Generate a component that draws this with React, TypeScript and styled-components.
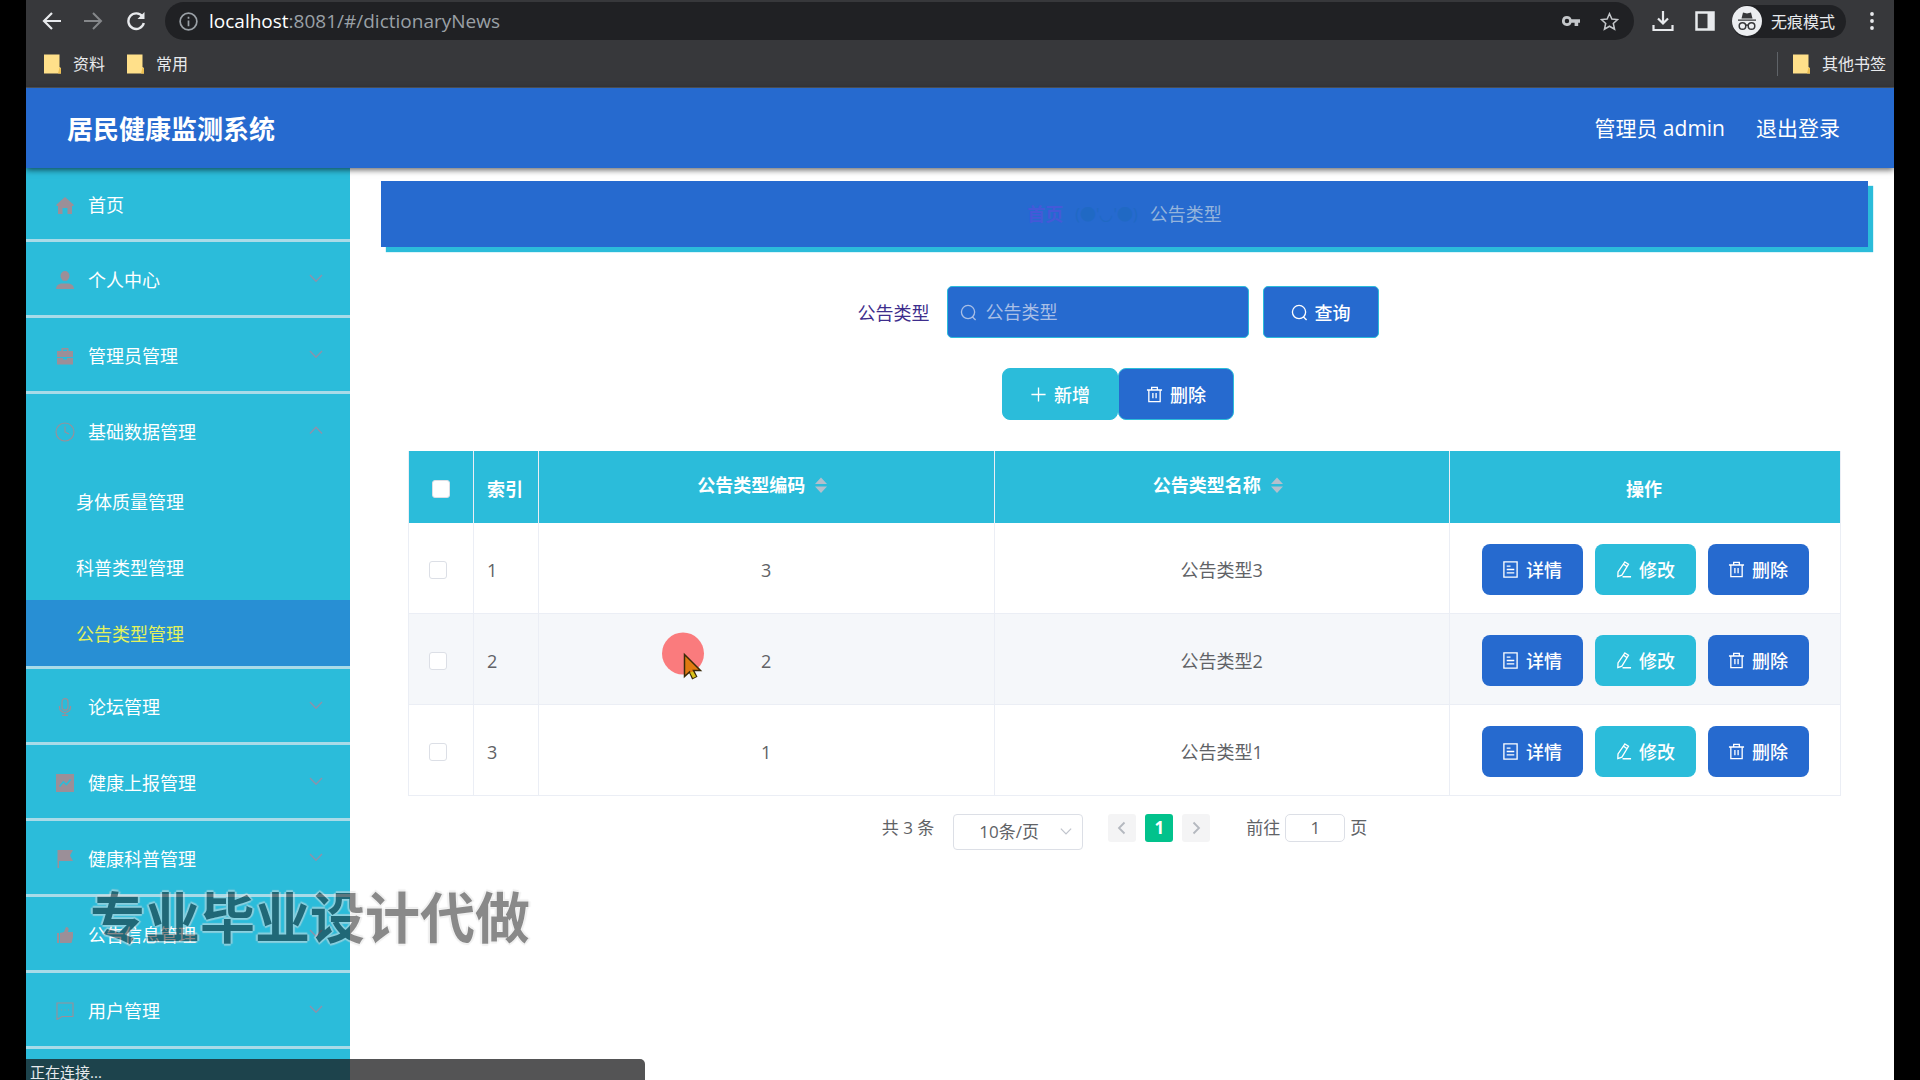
import React from "react";
import styled, { createGlobalStyle, css } from "styled-components";

const BLUE = "#266acf";
const CYAN = "#2bbcda";
const SANS = `"Open Sans", "Noto Sans CJK SC", sans-serif`;

const GlobalStyle = createGlobalStyle`
  *, *::before, *::after { box-sizing: border-box; }
  html, body { margin: 0; background: #000; }
  body { font-family: ${SANS}; font-size: 18px; color: #606266; overflow: hidden; }
  button, input, select { font: inherit; margin: 0; }
  a { color: inherit; text-decoration: none; }
  svg { display: block; flex: none; }
`;

const Screen = styled.div`
  display: flex;
  flex-direction: column;
  height: 100vh;
  margin: 0 26px;
  background: #fff;
  overflow: hidden;
  position: relative;
`;

/* ---------- browser frame ---------- */

const Toolbar = styled.div`
  display: flex;
  align-items: center;
  flex: none;
  height: 42px;
  padding: 0 10px 0 16px;
  background: #37383b;
`;

const IconButton = styled.button<{ $w: number; $color?: string }>`
  display: flex;
  align-items: center;
  justify-content: center;
  width: ${(p) => p.$w}px;
  height: 32px;
  padding: 0;
  border: 0;
  background: none;
  color: ${(p) => p.$color ?? "#e8eaed"};
`;

const Omnibox = styled.div`
  display: flex;
  align-items: center;
  flex: 1;
  height: 38px;
  margin: 0 8px 0 17px;
  padding: 0 8px 0 14px;
  border-radius: 19px;
  background: #202124;
  color: #9aa0a6;
`;

const Address = styled.span`
  flex: 1;
  padding-left: 11px;
  font-size: 19px;
  line-height: 24px;
  b { font-weight: 400; color: #fff; }
`;

const Incognito = styled.div`
  display: flex;
  align-items: center;
  gap: 9px;
  height: 33px;
  margin: 0 14px 0 6px;
  padding-right: 11px;
  border-radius: 17px;
  background: #202124;
  color: #e8eaed;
  font-size: 16px;
`;

const Bookmarks = styled.nav`
  display: flex;
  align-items: center;
  flex: none;
  height: 46px;
  padding: 0 8px 2px 18px;
  gap: 22px;
  border-bottom: 1px solid #56585c;
  background: #37383b;
  color: #e8eaed;
  font-size: 16px;
`;

const Bookmark = styled.a<{ $last?: boolean }>`
  display: flex;
  align-items: center;
  gap: 12px;
  line-height: 24px;
  ${(p) =>
    p.$last &&
    css`
      margin-left: auto;
      padding-left: 15px;
      border-left: 1px solid #5f6368;
    `}
`;

/* ---------- application frame ---------- */

const AppHeader = styled.header`
  display: flex;
  align-items: center;
  flex: none;
  height: 80px;
  padding: 0 54px 0 41px;
  background: ${BLUE};
  color: #fff;
  box-shadow: 0 2px 6px rgba(0, 0, 0, 0.6);
  z-index: 2;
`;

const AppTitle = styled.h1`
  flex: 1;
  margin: 0;
  padding-top: 2px;
  font-size: 26px;
  line-height: 36px;
`;

const HeaderLinks = styled.div`
  display: flex;
  gap: 31px;
  font-size: 21px;
  line-height: 30px;
`;

const Columns = styled.div`
  display: flex;
  flex: 1;
  min-height: 0;
`;

const Sidebar = styled.nav`
  flex: none;
  width: 324px;
  background: ${CYAN};
  color: #fff;
  overflow: hidden;
`;

const MenuGroup = styled.div`
  border-bottom: 3px solid #a9dbe8;
`;

const MenuItem = styled.a<{ $h: number }>`
  display: flex;
  align-items: center;
  height: ${(p) => p.$h}px;
  padding: 0 27px 0 29px;
  color: #fff;
  > svg { color: #8d92ab; }
`;

const MenuIcon = styled.i`
  display: flex;
  justify-content: center;
  width: 20px;
  padding-top: 2px;
  color: #9b8f98;
`;

const MenuText = styled.span`
  flex: 1;
  padding-left: 13px;
`;

const SubItem = styled.a<{ $active?: boolean }>`
  display: flex;
  align-items: center;
  height: 66px;
  padding-left: 50px;
  background: ${(p) => (p.$active ? "#288fd4" : "transparent")};
  color: ${(p) => (p.$active ? "#e3f25c" : "#fff")};
`;

const Main = styled.main`
  flex: 1;
  min-width: 0;
  padding: 13px 26px 0 31px;
`;

const Breadcrumb = styled.nav`
  display: flex;
  align-items: center;
  justify-content: center;
  gap: 12px;
  height: 66px;
  padding-bottom: 2px;
  background: ${BLUE};
  box-shadow: 5px 5px 1px ${CYAN};
  color: #94b4dc;
  a { font-weight: 700; color: #4459d8; }
  i { font-style: normal; font-size: 16px; color: #2069c4; }
`;

const Body = styled.div`
  display: flex;
  flex-direction: column;
  gap: 30px;
  padding: 39px 27px 0;
`;

const Line = styled.div<{ $gap?: number }>`
  display: flex;
  align-items: center;
  justify-content: center;
  gap: ${(p) => p.$gap ?? 0}px;
  padding-right: 13px;
`;

const FieldLabel = styled.label`
  margin-right: 3px;
  color: #3d2d8c;
`;

const SearchBox = styled.div`
  display: flex;
  align-items: center;
  gap: 9px;
  width: 302px;
  height: 52px;
  padding: 0 12px;
  border: 1px solid ${CYAN};
  border-radius: 5px;
  background: ${BLUE};
  color: #a9bfe6;
`;

const SearchInput = styled.input`
  flex: 1;
  min-width: 0;
  padding: 0;
  border: 0;
  outline: 0;
  background: none;
  color: #fff;
  &::placeholder { color: #a9bfe6; opacity: 1; }
`;

const Button = styled.button<{ $tone?: "cyan"; $size?: "row"; $radius?: number }>`
  display: flex;
  align-items: center;
  justify-content: center;
  gap: 7px;
  width: ${(p) => (p.$size === "row" ? 101 : 116)}px;
  height: ${(p) => (p.$size === "row" ? 51 : 52)}px;
  padding: 0;
  border: ${(p) => (p.$size === "row" ? "0" : `1px solid ${CYAN}`)};
  border-radius: ${(p) => p.$radius ?? 8}px;
  background: ${(p) => (p.$tone === "cyan" ? CYAN : BLUE)};
  color: #fff;
  font-weight: 500;
`;

/* ---------- table ---------- */

const Table = styled.table`
  width: 100%;
  margin-top: 1px;
  table-layout: fixed;
  border-spacing: 0;
  border-left: 1px solid #ebeef5;
  line-height: 24px;
`;

const Th = styled.th<{ $w?: number; $raised?: boolean }>`
  width: ${(p) => (p.$w ? `${p.$w}px` : "auto")};
  height: 72px;
  padding: ${(p) => (p.$raised ? "0 0 4px" : "3px 2px 0 0")};
  border-right: 1px solid #ebeef5;
  background: ${CYAN};
  color: #fff;
  font-weight: 700;
`;

const Td = styled.td<{ $align?: "left" | "center" }>`
  height: 91px;
  padding: 3px 0 0 ${(p) => (p.$align === "left" ? "13px" : "0")};
  border-right: 1px solid #ebeef5;
  border-bottom: 1px solid #ebeef5;
  text-align: ${(p) => p.$align ?? "center"};
`;

const Tr = styled.tr<{ $hover?: boolean }>`
  background: ${(p) => (p.$hover ? "#f5f7fa" : "#fff")};
`;

const Check = styled.input<{ $head?: boolean }>`
  appearance: none;
  display: block;
  width: 18px;
  height: 18px;
  margin: 0 0 0 ${(p) => (p.$head ? 23 : 20)}px;
  border: 1px solid #dcdfe6;
  border-radius: 3px;
  background: #fff;
`;

const SortLabel = styled.span`
  display: inline-flex;
  align-items: center;
  gap: 10px;
  padding-right: 8px;
`;

const Actions = styled.div`
  display: flex;
  justify-content: center;
  gap: 12px;
`;

/* ---------- pagination ---------- */

const Pager = styled.div`
  display: flex;
  align-items: flex-start;
  justify-content: center;
  margin-top: -12px;
  font-size: 17px;
  line-height: 28px;
`;

const SelectBox = styled.div`
  display: grid;
  align-items: center;
  margin: 0 25px 0 19px;
  > * { grid-area: 1 / 1; }
  svg { justify-self: end; margin-right: 11px; color: #c0c4cc; pointer-events: none; }
`;

const Select = styled.select`
  appearance: none;
  width: 130px;
  height: 36px;
  padding: 0 0 1px 25px;
  border: 1px solid #dcdfe6;
  border-radius: 4px;
  background: #fff;
  color: #606266;
`;

const PageButton = styled.button<{ $active?: boolean }>`
  display: flex;
  align-items: center;
  justify-content: center;
  width: 28px;
  height: 28px;
  margin-right: 9px;
  padding: 0;
  border: 0;
  border-radius: 3px;
  background: ${(p) => (p.$active ? "#02c28c" : "#f4f4f5")};
  color: ${(p) => (p.$active ? "#fff" : "#b4b8bf")};
  font-weight: 700;
`;

const Jump = styled.label`
  display: flex;
  gap: 5px;
  margin-left: 27px;
`;

const JumpInput = styled.input`
  width: 60px;
  height: 28px;
  padding: 0;
  border: 1px solid #dcdfe6;
  border-radius: 5px;
  color: #606266;
  text-align: center;
`;

/* ---------- overlays ---------- */

const Watermark = styled.div`
  position: absolute;
  left: 64px;
  top: 882px;
  z-index: 3;
  font-size: 55px;
  font-weight: 700;
  line-height: 70px;
  color: #161616;
  opacity: 0.5;
  text-shadow: 0 0 2px #fff, 2px 0 1px #ddd, -2px 0 1px #ddd, 0 2px 1px #ddd, 0 -2px 1px #ddd;
  pointer-events: none;
`;

const StatusBubble = styled.div`
  position: absolute;
  left: 0;
  bottom: 0;
  z-index: 4;
  width: 619px;
  height: 21px;
  padding: 1px 4px;
  overflow: hidden;
  border-radius: 0 5px 0 0;
  background: rgba(24, 24, 26, 0.74);
  color: #e8eaed;
  font-size: 15px;
  line-height: 24px;
`;

const Pointer = styled.div`
  position: absolute;
  left: 636px;
  top: 632px;
  z-index: 5;
  pointer-events: none;
`;

/* ---------- icons ---------- */

type IconProps = { size?: number; children: React.ReactNode; box?: number; sw?: number; fill?: boolean };
const Icon = ({ size = 18, box = 18, sw = 1.4, fill, children }: IconProps) => (
  <svg
    width={size}
    height={size}
    viewBox={`0 0 ${box} ${box}`}
    fill={fill ? "currentColor" : "none"}
    stroke={fill ? "none" : "currentColor"}
    strokeWidth={sw}
    aria-hidden="true"
  >
    {children}
  </svg>
);

const Search = () => (
  <Icon size={17}>
    <circle cx="8.5" cy="8.5" r="7" />
    <path d="M13 13.5l3.5 3.5" />
  </Icon>
);
const Plus = () => (
  <Icon size={17}>
    <path d="M9 1.5v15M1.5 9h15" />
  </Icon>
);
const Trash = () => (
  <Icon size={17}>
    <path d="M1 4.2h16M6 4V1.5h6V4M3 4.5v12h12v-12M7.3 7.5v5.5M10.7 7.5v5.5" />
  </Icon>
);
const Doc = () => (
  <Icon size={17}>
    <path d="M2 1h14v16H2zM5 5.5h4M5 9h8M5 12.5h8" />
  </Icon>
);
const Edit = () => (
  <Icon size={17}>
    <path d="M10.5 1l3.8 2.5-7 11.500-4.3 1.500.2-5zM9 3.500l3.8 2.500M8 16.700h9" />
  </Icon>
);
const Chevron = ({ up, size = 14 }: { up?: boolean; size?: number }) => (
  <Icon size={size} box={14} sw={1.4}>
    <path d={up ? "M1 9.500L7 3.200l6 6.300" : "M1 3L7 9.300 13 3"} />
  </Icon>
);
const Carets = () => (
  <svg width="12" height="18" viewBox="0 0 12 18" fill="#b4bfcc" aria-hidden="true">
    <path d="M0 8L6 1.5 12 8zM0 10.5h12L6 17z" />
  </svg>
);
const Folder = () => (
  <svg width="17" height="20" viewBox="0 0 17 20" aria-hidden="true">
    <path d="M0 .5h15.5V13l1.500 1v5.500H0z" fill="#ffe08a" />
    <path d="M14 19.500l1.500-6 1.500 1v5z" fill="#eec052" />
  </svg>
);

const glyphs: Record<string, React.ReactNode> = {
  home: <Icon fill><path d="M9 1L.5 8.500V10H2v8h4.500v-6h5v6H16v-8h1.500V8.500z" /></Icon>,
  person: <Icon fill><path d="M9 0a4.500 4.800 0 014.500 4.800c0 2-1.200 4-2.500 4.900H7C5.700 8.800 4.500 6.800 4.500 4.800A4.500 4.800 0 019 0zM0 18c0-3 2-5 5-5.500h8c3 .5 5 2.500 5 5.500z" /></Icon>,
  suitcase: <Icon fill><path d="M5.500 4V1h7v3H17v6H1V4zm1.500 0h4V2.500H7zM1 11h6v1.500h4V11h6v6.500H1z" /></Icon>,
  clock: <Icon size={20} box={20} sw={1.1}><circle cx="10" cy="10" r="9" /><path d="M10 4.500V10l4 2" /></Icon>,
  mic: <Icon sw={1.2}><rect x="6" y="0.700" width="6" height="11.500" rx="3" /><path d="M3.500 8v1.500a5.500 5 0 0011 0V8M9 14.500v3M6 17.300h6" /></Icon>,
  chart: <Icon fill><path fillRule="evenodd" d="M0 0h18v18H0zM3 12l1.200 1 3.300-4 3 2.700L15.200 6 14 5l-3.700 4.500-3-2.700z" /></Icon>,
  flag: <Icon fill><path d="M1.500 0H17l-3 5.500 3 5.500H3v7H1.500z" /></Icon>,
  notice: <Icon fill><path d="M1 7h2v10H1zM4 7l4-1 2-5c2 0 3 1 2.500 3L12 6h5v5l-1.500 6H4z" /></Icon>,
  message: <Icon sw={1.1}><path d="M1 1h16v13.500H6L1 17.500zM5 8h1M8.500 8h1M12 8h1" /></Icon>,
};

/* ---------- data ---------- */

const menu: { icon: string; text: string; children?: string[] }[] = [
  { icon: "home", text: "首页" },
  { icon: "person", text: "个人中心" },
  { icon: "suitcase", text: "管理员管理" },
  { icon: "clock", text: "基础数据管理", children: ["身体质量管理", "科普类型管理", "公告类型管理"] },
  { icon: "mic", text: "论坛管理" },
  { icon: "chart", text: "健康上报管理" },
  { icon: "flag", text: "健康科普管理" },
  { icon: "notice", text: "公告信息管理" },
  { icon: "message", text: "用户管理" },
];

const rows = [
  { index: 1, code: 3, name: "公告类型3" },
  { index: 2, code: 2, name: "公告类型2" },
  { index: 3, code: 1, name: "公告类型1" },
];

export default function App() {
  return (
    <>
      <GlobalStyle />
      <Screen>
        <Toolbar>
          <IconButton $w={20} aria-label="后退">
            <Icon size={20} box={20} sw={2.2}><path d="M19 10H2M10 2l-8 8 8 8" /></Icon>
          </IconButton>
          <IconButton $w={62} $color="#85878a" aria-label="前进">
            <Icon size={20} box={20} sw={2}><path d="M1 10h17M10 2l8 8-8 8" /></Icon>
          </IconButton>
          <IconButton $w={24} aria-label="重新加载">
            <Icon size={20} box={20} sw={2.4}><path d="M16.500 5.500A7.800 7.800 0 1017.800 12" /><path d="M18.500 1v7h-7z" fill="currentColor" stroke="none" /></Icon>
          </IconButton>
          <Omnibox>
            <Icon size={19} box={20} sw={1.8}><circle cx="10" cy="10" r="8.800" /><path d="M10 9v6M10 5v2" /></Icon>
            <Address><b>localhost</b>:8081/#/dictionaryNews</Address>
            <IconButton $w={46} $color="#c4c7ca" aria-label="密码">
              <Icon size={18} box={20} fill><path fillRule="evenodd" d="M5.500 4.500a5.500 5.500 0 015.100 3.500H20v4h-2v3.500h-4V12h-3.400A5.500 5.500 0 115.500 4.500zm0 3a2.500 2.500 0 100 5 2.500 2.500 0 000-5z" /></Icon>
            </IconButton>
            <IconButton $w={32} $color="#c4c7ca" aria-label="收藏">
              <Icon size={19} box={20} sw={1.6}><path d="M10 1.800l2.500 5.600 6 .6-4.500 4.100 1.300 6L10 15l-5.300 3.100 1.300-6L1.500 8l6-.6z" /></Icon>
            </IconButton>
          </Omnibox>
          <IconButton $w={42} aria-label="下载">
            <Icon size={22} box={22} sw={2.2}><path d="M11 1v12M6 8.500l5 5 5-5M1.500 15v5h19v-5" /></Icon>
          </IconButton>
          <IconButton $w={42} aria-label="侧边栏">
            <Icon size={20} box={20} sw={2.5}><path d="M1.500 1.500h17v17h-17z" /><path d="M12.500 1.500h6v17h-6z" fill="currentColor" stroke="none" /></Icon>
          </IconButton>
          <Incognito>
            <svg width="30" height="30" viewBox="0 0 30 30" aria-hidden="true">
              <circle cx="15" cy="15" r="15" fill="#eceef1" />
              <path d="M11 6.500l4 1 4-1 1.500 6h-11zM6 13.500h18v1.300H6z" fill="#37383b" />
              <g fill="none" stroke="#37383b" strokeWidth="1.5"><circle cx="10.500" cy="20" r="3.300" /><circle cx="19.500" cy="20" r="3.300" /><path d="M13.800 19.500q1.200-.8 2.400 0" /></g>
            </svg>
            无痕模式
          </Incognito>
          <IconButton $w={24} aria-label="菜单">
            <Icon size={18} fill><circle cx="9" cy="2" r="1.900" /><circle cx="9" cy="9" r="1.900" /><circle cx="9" cy="16" r="1.900" /></Icon>
          </IconButton>
        </Toolbar>
        <Bookmarks>
          <Bookmark href="#"><Folder />资料</Bookmark>
          <Bookmark href="#"><Folder />常用</Bookmark>
          <Bookmark href="#" $last><Folder />其他书签</Bookmark>
        </Bookmarks>

        <AppHeader>
          <AppTitle>居民健康监测系统</AppTitle>
          <HeaderLinks>
            <span>管理员 admin</span>
            <a href="#logout">退出登录</a>
          </HeaderLinks>
        </AppHeader>

        <Columns>
          <Sidebar>
            {menu.map((m, i) => (
              <MenuGroup key={m.text}>
                <MenuItem href="#" $h={i === 0 ? 71 : m.children ? 74 : 73}>
                  <MenuIcon>{glyphs[m.icon]}</MenuIcon>
                  <MenuText>{m.text}</MenuText>
                  {i > 0 && <Chevron up={!!m.children} />}
                </MenuItem>
                {m.children?.map((c) => (
                  <SubItem key={c} href="#" $active={c === "公告类型管理"}>{c}</SubItem>
                ))}
              </MenuGroup>
            ))}
          </Sidebar>

          <Main>
            <Breadcrumb>
              <a href="#">首页</a>
              <i>(●'◡'●)</i>
              <span>公告类型</span>
            </Breadcrumb>
            <Body>
              <Line $gap={14}>
                <FieldLabel htmlFor="type">公告类型</FieldLabel>
                <SearchBox>
                  <Search />
                  <SearchInput id="type" placeholder="公告类型" />
                </SearchBox>
                <Button $radius={5}><Search />查询</Button>
              </Line>
              <Line>
                <Button $tone="cyan"><Plus />新增</Button>
                <Button><Trash />删除</Button>
              </Line>
              <Table>
                <thead>
                  <tr>
                    <Th $w={65}><Check type="checkbox" $head aria-label="全选" /></Th>
                    <Th $w={65}>索引</Th>
                    <Th $raised><SortLabel>公告类型编码<Carets /></SortLabel></Th>
                    <Th $raised><SortLabel>公告类型名称<Carets /></SortLabel></Th>
                    <Th $w={391}>操作</Th>
                  </tr>
                </thead>
                <tbody>
                  {rows.map((r) => (
                    <Tr key={r.index} $hover={r.index === 2}>
                      <Td><Check type="checkbox" aria-label={`选择 ${r.name}`} /></Td>
                      <Td $align="left">{r.index}</Td>
                      <Td>{r.code}</Td>
                      <Td>{r.name}</Td>
                      <Td>
                        <Actions>
                          <Button $size="row"><Doc />详情</Button>
                          <Button $size="row" $tone="cyan"><Edit />修改</Button>
                          <Button $size="row"><Trash />删除</Button>
                        </Actions>
                      </Td>
                    </Tr>
                  ))}
                </tbody>
              </Table>
              <Pager>
                <span>共 3 条</span>
                <SelectBox>
                  <Select aria-label="每页条数"><option>10条/页</option></Select>
                  <Chevron size={12} />
                </SelectBox>
                <PageButton aria-label="上一页">
                  <Icon size={14} box={14} sw={1.8}><path d="M9.500 1.500L4 7l5.500 5.500" /></Icon>
                </PageButton>
                <PageButton $active>1</PageButton>
                <PageButton aria-label="下一页">
                  <Icon size={14} box={14} sw={1.8}><path d="M4.500 1.500L10 7l-5.500 5.500" /></Icon>
                </PageButton>
                <Jump>前往<JumpInput defaultValue="1" />页</Jump>
              </Pager>
            </Body>
          </Main>
        </Columns>

        <Watermark>专业毕业设计代做</Watermark>
        <StatusBubble>正在连接...</StatusBubble>
        <Pointer>
          <svg width="44" height="50" viewBox="0 0 44 50" aria-hidden="true">
            <circle cx="21" cy="21.500" r="21" fill="#ff0000" fillOpacity="0.5" />
            <path d="M22.500 22.500v22l5-4.500 3 6.500 4-2-3-6h7z" fill="#e07a10" stroke="#3a2a08" strokeWidth="1.5" />
            <path d="M28 40.500l3 5.500 3-1.500-3-5z" fill="#d6c21a" />
          </svg>
        </Pointer>
      </Screen>
    </>
  );
}
